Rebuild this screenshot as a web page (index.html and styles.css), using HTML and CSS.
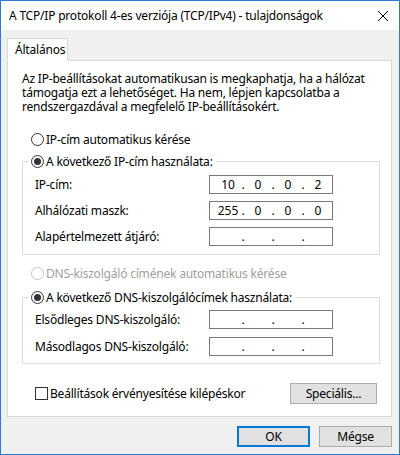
FILE: index.html
```html
<!DOCTYPE html>
<html lang="hu">
  <head>
    <meta charset="UTF-8" />
    <title>TCP/IPv4 tulajdonságok</title>
    <link rel="stylesheet" href="styles.css">
  </head>
  <body>
    <div class="window">
      <div class="titlebar">
        <span class="title">A TCP/IP protokoll 4-es verziója (TCP/IPv4) - tulajdonságok</span>
        <svg class="close" width="12" height="12" viewBox="0 0 12 12">
          <path d="M1 1 L11 11 M11 1 L1 11" stroke="#000" stroke-width="1" fill="none" />
        </svg>
      </div>
      <div class="client">
        <div class="tabs">
          <div class="tab">Általános</div>
        </div>
        <div class="panel">
          <p class="intro">
            Az IP-beállításokat automatikusan is megkaphatja, ha a hálózat<br>
            támogatja ezt a lehetőséget. Ha nem, lépjen kapcsolatba a<br>
            rendszergazdával a megfelelő IP-beállításokért.
          </p>

          <div class="option first"><span class="radio"></span>IP-cím automatikus kérése</div>
          <fieldset class="group ip-group">
            <legend><span class="option"><span class="radio checked"></span>A következő IP-cím használata:</span></legend>
            <div class="fields">
              <label>IP-cím:</label>
              <div class="ip"><span>10</span><i>.</i><span>0</span><i>.</i><span>0</span><i>.</i><span>2</span></div>
              <label>Alhálózati maszk:</label>
              <div class="ip"><span>255</span><i>.</i><span>0</span><i>.</i><span>0</span><i>.</i><span>0</span></div>
              <label>Alapértelmezett átjáró:</label>
              <div class="ip"><span></span><i>.</i><span></span><i>.</i><span></span><i>.</i><span></span></div>
            </div>
          </fieldset>

          <div class="option disabled dns-auto"><span class="radio"></span>DNS-kiszolgáló címének automatikus kérése</div>
          <fieldset class="group dns-group">
            <legend><span class="option"><span class="radio checked"></span>A következő DNS-kiszolgálócímek használata:</span></legend>
            <div class="fields">
              <label>Elsődleges DNS-kiszolgáló:</label>
              <div class="ip"><span></span><i>.</i><span></span><i>.</i><span></span><i>.</i><span></span></div>
              <label>Másodlagos DNS-kiszolgáló:</label>
              <div class="ip"><span></span><i>.</i><span></span><i>.</i><span></span><i>.</i><span></span></div>
            </div>
          </fieldset>

          <div class="bottom-row">
            <div class="option"><span class="check"></span>Beállítások érvényesítése kilépéskor</div>
            <button type="button" class="btn special">Speciális...</button>
          </div>
        </div>
        <div class="actions">
          <button type="button" class="btn default">OK</button>
          <button type="button" class="btn">Mégse</button>
        </div>
      </div>
    </div>
  </body>
</html>
```

FILE: styles.css
```css
* {
  box-sizing: border-box;
}

body {
  margin: 0;
  font-family: "Noto Sans", "Liberation Sans", sans-serif;
  font-size: 12px;
  letter-spacing: -0.2px;
  color: #000;
}

.window {
  width: 400px;
  height: 455px;
  border: 1px solid #2a7bd4;
  display: flex;
  flex-direction: column;
  background: #f0f0f0;
}

.titlebar {
  height: 29px;
  background: #fff;
  display: flex;
  align-items: center;
  justify-content: space-between;
  padding: 0 10px 0 8px;
}

.title {
  font-size: 12px;
}

.close {
  display: block;
}

.client {
  flex: 1;
  padding: 8px 7px 0 6px;
}

.tabs {
  display: flex;
}

.tab {
  position: relative;
  height: 23px;
  margin-bottom: -1px;
  padding: 0 7px;
  line-height: 21px;
  background: #fff;
  border: 1px solid #d9d9d9;
  border-bottom-color: #fff;
  width: 61px;
}

.panel {
  background: #fff;
  border: 1px solid #d9d9d9;
  padding: 11px 11px 12px 14px;
}

.intro {
  margin: 0;
  line-height: 14px;
}

.option {
  display: flex;
  align-items: center;
  height: 16px;
  white-space: nowrap;
}

.option.first {
  margin-top: 17px;
  padding-left: 9px;
}

.option.disabled {
  color: #a0a0a0;
}

.dns-auto {
  margin-top: 10px;
  padding-left: 9px;
}

.radio {
  width: 13px;
  height: 13px;
  border: 1px solid #333;
  border-radius: 50%;
  margin-right: 2px;
  display: flex;
  align-items: center;
  justify-content: center;
  flex: none;
}

.radio.checked::after {
  content: "";
  width: 7px;
  height: 7px;
  border-radius: 50%;
  background: #333;
}

.option.disabled .radio {
  border-color: #c4c4c4;
}

.check {
  width: 13px;
  height: 13px;
  border: 1px solid #333;
  margin-right: 2px;
  flex: none;
}

.group {
  margin: 6px 0 0;
  border: 1px solid #dcdcdc;
  padding: 6px 12px 8px 12px;
  min-width: 0;
}

.group legend {
  padding: 0 4px 0 2px;
  margin-left: -6px;
}

.dns-group {
  margin-top: 8px;
  padding-top: 5px;
  padding-bottom: 7px;
}

.fields {
  display: grid;
  grid-template-columns: 174px 124px;
  row-gap: 7px;
  align-items: center;
}

.dns-group .fields {
  row-gap: 8px;
}

.ip {
  height: 19px;
  border: 1px solid #7a7a7a;
  display: flex;
  align-items: center;
  padding: 0 2px 0 6px;
  letter-spacing: 0;
}

.ip span {
  width: 24px;
  text-align: center;
}

.ip i {
  font-style: normal;
  width: 6px;
  text-align: center;
}

.bottom-row {
  margin-top: 19px;
  padding: 0 3px 0 13px;
  display: flex;
  justify-content: space-between;
  align-items: center;
}

.btn {
  font-family: inherit;
  font-size: 12px;
  letter-spacing: -0.2px;
  height: 21px;
  background: #e1e1e1;
  border: 1px solid #adadad;
  padding: 0;
  color: #000;
}

.special {
  width: 87px;
}

.actions {
  margin-top: 9px;
  display: flex;
  justify-content: flex-end;
  gap: 9px;
}

.actions .btn {
  width: 73px;
}

.btn.default {
  border-color: #0078d7;
  box-shadow: inset 0 0 0 1px #0078d7;
}
```
